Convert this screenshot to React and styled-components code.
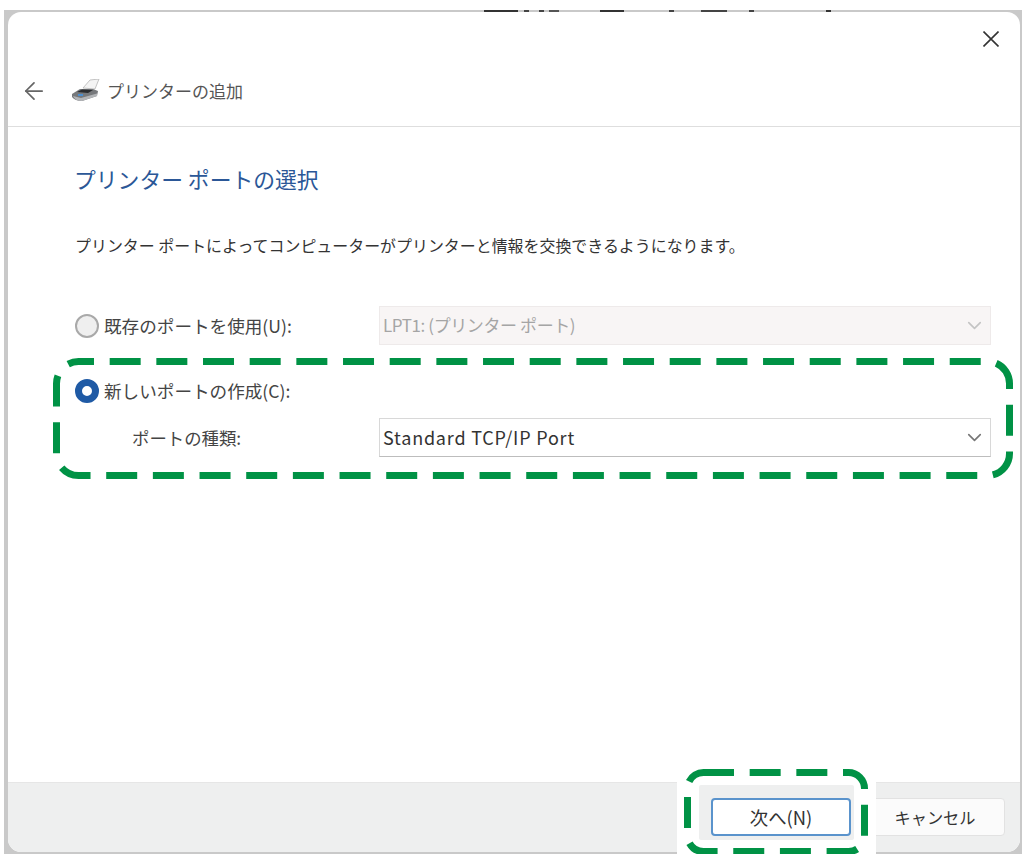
import styled, { createGlobalStyle } from "styled-components";
import { ArrowLeft, ChevronDown } from "lucide-react";

const GlobalStyle = createGlobalStyle`
    html, body {
        margin: 0;
        background: #fff;
    }
    body {
        font-family: "Noto Sans CJK JP", "Noto Sans", sans-serif;
        color: #333;
    }
`

const PrinterIcon = () => (
    <svg width="30" height="24" viewBox="0 0 30 24">
        <path d="M12 9 L19 1 L28 0 L24 10 Z" fill="#f4f4f4" stroke="#b5b5b5" strokeWidth="0.8" />
        <path d="M1 15 L9 10 L22 10 L27 12 L26 17 L11 22 Q4 22 1 18 Z" fill="#77797c" />
        <path d="M6 13 L11 10.5 L22 11 L17 14 Z" fill="#2a2c2f" />
        <path d="M2 17 L10 19 L26 14.5 L26 17 L11 22 Q4 22 2 17 Z" fill="#b3b5b8" />
        <rect x="7" y="15" width="5" height="2" fill="#4d8fd0" />
    </svg>
)

const Highlight = ({ width, height, offset, radius }) => (
    <svg width={width} height={height} viewBox={`0 0 ${width} ${height}`}>
        <rect
            x="3.5"
            y="3.5"
            width={width - 7}
            height={height - 7}
            rx={radius}
            fill="none"
            stroke="#009245"
            strokeWidth="7"
            strokeDasharray="31 15.67"
            strokeDashoffset={offset}
        />
    </svg>
)

const Select = ({ disabled, children }) => (
    <SelectBox $disabled={disabled}>
        <span>{children}</span>
        <ChevronDown size={23} strokeWidth={1.7} color={disabled ? "#c4c4c4" : "#777"} />
    </SelectBox>
)

const App = () => (
    <>
        <GlobalStyle />
        <Frame>
            <Scraps width="320" height="3" viewBox="0 0 320 3">
                <rect x="0" y="0" width="34" height="2" fill="#333" />
                <rect x="40" y="0" width="5" height="2" fill="#444" />
                <rect x="55" y="0" width="5" height="2" fill="#444" />
                <rect x="65" y="0" width="10" height="2" fill="#555" />
                <rect x="116" y="0" width="24" height="2" fill="#333" />
                <rect x="185" y="0" width="5" height="2" fill="#444" />
                <rect x="217" y="0" width="26" height="2" fill="#444" />
                <rect x="265" y="0" width="5" height="2" fill="#444" />
                <rect x="342" y="0" width="5" height="2" fill="#333" />
            </Scraps>
            <Window>
                <CloseRow>
                    <svg width="16" height="16" viewBox="0 0 16 16">
                        <path d="M0.5 0.5 L15.5 15.5 M15.5 0.5 L0.5 15.5" stroke="#333" strokeWidth="1.6" fill="none" />
                    </svg>
                </CloseRow>
                <NavBar>
                    <ArrowLeft size={28} strokeWidth={1.5} color="#666" />
                    <NavTitle>
                        <PrinterIcon />
                        <span>プリンターの追加</span>
                    </NavTitle>
                </NavBar>
                <Content>
                    <Heading>プリンター ポートの選択</Heading>
                    <Description>
                        プリンター ポートによってコンピューターがプリンターと情報を交換できるようになります。
                    </Description>
                    <Form>
                        <RadioLabel>
                            <Radio />
                            既存のポートを使用(U):
                        </RadioLabel>
                        <Select disabled>LPT1: (プリンター ポート)</Select>
                        <NewPortArea>
                            <Dashes>
                                <Highlight width={960} height={121} offset={15.5} radius={22} />
                            </Dashes>
                            <RadioLabel>
                                <Radio $checked />
                                新しいポートの作成(C):
                            </RadioLabel>
                            <TypeRow>
                                <TypeLabel>ポートの種類:</TypeLabel>
                                <Select>Standard TCP/IP Port</Select>
                            </TypeRow>
                        </NewPortArea>
                    </Form>
                </Content>
                <Footer>
                    <NextSlot>
                        <NextDashes>
                            <Highlight width={184} height={86} offset={0.5} radius={16} />
                        </NextDashes>
                        <Button $primary>次へ(N)</Button>
                    </NextSlot>
                    <Button>キャンセル</Button>
                </Footer>
            </Window>
        </Frame>
    </>
)

const Frame = styled.div`
    position: relative;
    box-sizing: border-box;
    width: 1018px;
    height: 844px;
    margin: 10px 0 0 4px;
    padding: 2px 2px 2px 4px;
    background: #c9c9c9;
`

const Scraps = styled.svg`
    position: absolute;
    top: 0;
    left: 480px;
    overflow: visible;
`

const Window = styled.div`
    display: flex;
    flex-direction: column;
    height: 100%;
    background: #fff;
    border-radius: 13px;
`

const CloseRow = styled.div`
    display: flex;
    justify-content: flex-end;
    height: 43px;
    padding: 19px 21px 0 0;
    box-sizing: border-box;
`

const NavBar = styled.div`
    display: flex;
    align-items: center;
    gap: 23px;
    height: 72px;
    padding: 0 0 0 12px;
    box-sizing: border-box;
    border-bottom: 1px solid #dedede;
`

const NavTitle = styled.div`
    display: flex;
    align-items: center;
    gap: 6px;
    font-size: 17px;
    color: #555;
`

const Content = styled.div`
    flex: 1;
    padding: 33px 30px 0 67px;
`

const Heading = styled.h1`
    margin: 0 0 0 -1px;
    font-size: 21.8px;
    line-height: 38px;
    font-weight: 400;
    color: #2b5797;
`

const Description = styled.p`
    margin: 34px 0 0;
    font-size: 15.95px;
    line-height: 26px;
    color: #333;
`

const Form = styled.div`
    display: grid;
    grid-template-columns: 304px 612px;
    align-items: center;
    row-gap: 34px;
    margin-top: 48px;
`

const RadioLabel = styled.div`
    display: flex;
    align-items: center;
    gap: 5px;
    font-size: 17.6px;
    line-height: 24px;
    color: #444;
`

const Radio = styled.span`
    box-sizing: border-box;
    width: 24px;
    height: 24px;
    border-radius: 50%;
    border: ${(p) => (p.$checked ? "7px solid #1f5aa5" : "2px solid #a9a9a9")};
    background: ${(p) => (p.$checked ? "#fff" : "#efefef")};
`

const SelectBox = styled.div`
    display: flex;
    align-items: center;
    justify-content: space-between;
    box-sizing: border-box;
    height: 39px;
    padding: 0 4px 0 3px;
    font-size: ${(p) => (p.$disabled ? "17px" : "18px")};
    letter-spacing: ${(p) => (p.$disabled ? "-0.4px" : "0.8px")};
    border: 1px solid ${(p) => (p.$disabled ? "#eeeaea" : "#d8d8d8")};
    border-bottom-color: ${(p) => (p.$disabled ? "#eeeaea" : "#bdbdbd")};
    background: ${(p) => (p.$disabled ? "#f8f5f5" : "#fff")};
    color: ${(p) => (p.$disabled ? "#a5a5a5" : "#333")};

    span {
        position: relative;
        top: -1px;
    }
`

const NewPortArea = styled.div`
    position: relative;
    grid-column: 1 / -1;
    display: flex;
    flex-direction: column;
    gap: 15px;
`

const Dashes = styled.div`
    position: absolute;
    top: -21px;
    left: -22px;
    line-height: 0;
`

const TypeRow = styled.div`
    display: grid;
    grid-template-columns: 304px 612px;
    align-items: center;
`

const TypeLabel = styled.div`
    padding-left: 57px;
    font-size: 17.4px;
    color: #444;
`

const Footer = styled.div`
    display: flex;
    justify-content: flex-end;
    align-items: flex-end;
    gap: 11px;
    height: 70px;
    padding: 0 15px 16px 0;
    box-sizing: border-box;
    background: #eeefef;
    border-top: 1px solid #e6e6e6;
    border-radius: 0 0 13px 13px;
`

const NextSlot = styled.div`
    position: relative;
    z-index: 1;
    padding: 13px 3px 4px 12px;
    margin: 0 0 -4px 0;
    background: #eeefef;
    box-shadow: 0 0 0 22px #fff;
    border-radius: 2px;
`

const NextDashes = styled.div`
    position: absolute;
    top: -16px;
    left: -15px;
    line-height: 0;
`

const Button = styled.button`
    display: block;
    box-sizing: border-box;
    width: 140px;
    height: 38px;
    padding: 0;
    font: inherit;
    font-size: ${(p) => (p.$primary ? "18.4px" : "16.2px")};
    color: #333;
    background: ${(p) => (p.$primary ? "#fff" : "#fbfbfb")};
    border: ${(p) => (p.$primary ? "2px solid #5a93cc" : "1px solid #e2e2e2")};
    border-radius: 4px;
`

export default App
